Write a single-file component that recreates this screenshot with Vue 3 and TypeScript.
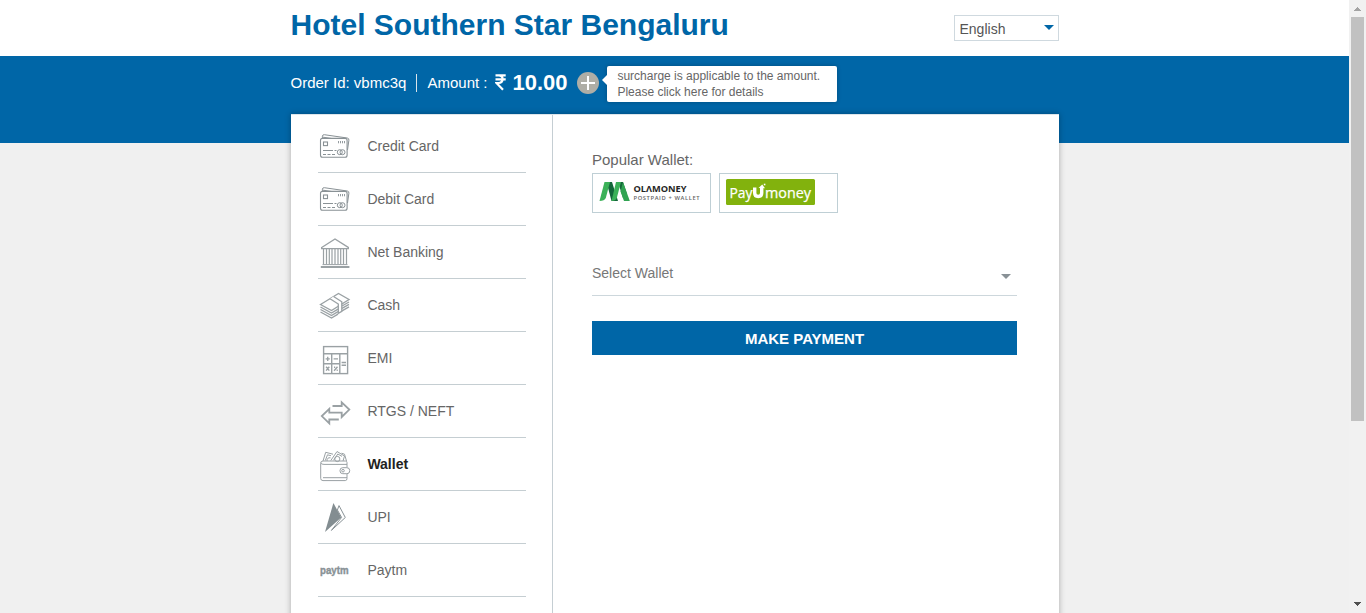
<script setup lang="ts">
import { ref } from 'vue'

interface Method {
  id: string
  label: string
}

const methods: Method[] = [
  { id: 'credit', label: 'Credit Card' },
  { id: 'debit', label: 'Debit Card' },
  { id: 'bank', label: 'Net Banking' },
  { id: 'cash', label: 'Cash' },
  { id: 'emi', label: 'EMI' },
  { id: 'rtgs', label: 'RTGS / NEFT' },
  { id: 'wallet', label: 'Wallet' },
  { id: 'upi', label: 'UPI' },
  { id: 'paytm', label: 'Paytm' },
]
const active = ref('wallet')
</script>

<template>
  <div class="window">
    <div class="page">
      <header class="top">
        <div class="wrap top-row">
          <h1>Hotel Southern Star Bengaluru</h1>
          <div class="lang"><span>English</span><i></i></div>
        </div>
      </header>
      <section class="band">
        <div class="wrap order">
          <span class="order-id">Order Id: vbmc3q</span>
          <span class="sep"></span>
          <span class="amount-label">Amount :</span>
          <svg class="rupee" width="11" height="17" viewBox="0 0 11 17">
            <path d="M.5 1.3H10.7M.5 5.3H10.7M.8 1.3H3.7Q7.6 1.3 7.6 5.1Q7.6 9 3.5 9H1.5L8 15.8" fill="none" stroke="#fff" stroke-width="2.2" />
          </svg>
          <strong class="amount">10.00</strong>
          <svg class="plus" width="22" height="22" viewBox="0 0 22 22">
            <circle cx="11" cy="11" r="11" fill="#afaea6" />
            <path d="M11 4v14M4 11h14" stroke="#fff" stroke-width="2" />
          </svg>
          <div class="tip">surcharge is applicable to the amount.<br />Please click here for details</div>
        </div>
      </section>
      <main class="wrap card">
        <nav class="menu">
          <div
            v-for="m in methods"
            :key="m.id"
            class="item"
            :class="{ active: m.id === active }"
            @click="active = m.id"
          >
            <svg class="icon" width="32" height="34" viewBox="0 0 32 34" fill="none" stroke="#9aa1a4">
              <g v-if="m.id === 'credit' || m.id === 'debit'" stroke="#899195">
                <path d="M3.4 9V6.2Q3.6 4.5 5.3 4.7L28.3 8Q30.2 8.4 29.9 10.2L28.5 20M4 7.2L28 10.8" stroke-width="1" />
                <rect x="1.5" y="8.4" width="26.6" height="18.8" rx="2" fill="#fff" stroke-width="1.1" />
                <rect x="4.5" y="12" width="4" height="3.6" stroke-width="1.1" />
                <path d="M19.5 11v2.3M21.5 11v2.3M23.5 11v2.3M25.5 11v2.3" stroke-width=".9" />
                <path d="M4 20.5h10M15.5 20.5h2M4 24.5h3M8.5 24.5h3M13 24.5h3" />
                <circle cx="20.8" cy="22.2" r="2.5" />
                <circle cx="23.5" cy="22.2" r="2.5" />
              </g>
              <g v-else-if="m.id === 'bank'">
                <path d="M2.7 11.5L16 3L29.3 11.5V12.6H2.7Z" stroke-width="1.4" />
                <path d="M4.5 13v15M7.5 13v15M10.3 13v15M13 13v15M16 13v15M19 13v15M21.7 13v15M24.5 13v15M27.5 13v15" stroke-width="1.2" />
                <path d="M3.5 28.6h25" stroke-width="1" />
                <path d="M1.8 31h28.6" stroke-width="2" />
              </g>
              <g v-else-if="m.id === 'cash'" stroke-width="1.35">
                <path d="M1.5 15.5L19.5 4.5L30 10.5L12.5 21.5Z" />
                <path d="M1.5 18L12.5 24L19 20.2M1.5 20.5L12.5 26.5L19 22.7M1.5 23L12.5 29L19 25.2M23 17L30 13M23 19.4L30 15.4M23 21.8L30 17.8" />
                <path d="M11 9.7L19.3 15V24.4L22.8 22.3V12.8L14.6 7.5" fill="#fff" />
              </g>
              <g v-else-if="m.id === 'emi'" stroke-width="1.4">
                <rect x="4.6" y="4.6" width="24" height="27" />
                <path d="M4.6 11.8h24M4.6 21.8h16.2M12.7 11.8v19.8M20.8 11.8v19.8" />
                <path d="M6.6 16.9h4.2M8.7 14.8v4.2M14.6 16.9h4.4M22.6 20.5h4.4M22.6 23.2h4.4M7.1 24.8l3.2 3.8M10.3 24.8l-3.2 3.8M18.5 24.7l-3.4 4M15 25.2h1.2M17.6 28.2h1.2" />
              </g>
              <path
                v-else-if="m.id === 'rtgs'"
                d="M13.5 11H22.7V7.3L30.3 14.6L22.7 22V17.7H10.3V13.9L2.8 21.1L10.3 28.3V24.5H19.8"
                stroke-width="1.8"
              />
              <g v-else-if="m.id === 'wallet'" stroke-width="1">
                <path d="M4 13L6.7 4.3L14 6.2M11.8 12.5L18 3.5L25.5 8L24 13M22.5 5.2L25.5 6.2L27.5 13M6.3 12.5L8.5 6.8L12 7.7M14.5 12.3L18.8 6L23 8.4" />
                <circle cx="18.3" cy="11" r="2.6" />
                <path d="M8 13Q8 9.2 11.5 9.8" />
                <path d="M28 19.5V14.5Q28 13 26.3 13H4Q1.7 13 1.7 15.3V30.3Q1.7 32.6 4 32.6H26.3Q28 32.6 28 30.5V25.5M1.8 15Q2.5 16.4 5 16.4H28M4 29.7h24" />
                <rect x="21" y="19.7" width="9.7" height="6" rx="2.8" fill="#fff" />
                <circle cx="24" cy="22.7" r="1.3" />
              </g>
              <g v-else-if="m.id === 'upi'" stroke="none">
                <path d="M14.4 2L22.2 16.4L6 31Z" fill="#838d91" />
                <path d="M20 4.6L26.3 16.5L12.4 29.4L22.6 16.4L18.4 9Z" stroke="#899296" stroke-width="1" />
              </g>
              <text
                v-else
                x="1"
                y="19.6"
                textLength="28.5"
                lengthAdjust="spacingAndGlyphs"
                fill="#899296"
                stroke="#899296"
                stroke-width=".4"
                font-family="Liberation Sans, Arial, sans-serif"
                font-weight="bold"
                font-size="10.5"
              >paytm</text>
            </svg>
            <span>{{ m.label }}</span>
          </div>
        </nav>
        <div class="panel">
          <div class="popular">Popular Wallet:</div>
          <div class="logos">
            <div class="logo">
              <svg width="117" height="38" viewBox="0 0 117 38" font-family="Open Sans, sans-serif">
                <path d="M13.5 8H19L25 27H18.5Z" fill="#14673a" />
                <path d="M11.5 8H17L12.8 24Q11.5 27 6.5 27Z" fill="#3bb158" />
                <path d="M25 8H30L34 20L30 24Z" fill="#14673a" />
                <path d="M23 8H28L23.8 24Q22.5 27 18.5 27Z" fill="#3bb158" />
                <path d="M30 8L36.8 27H31L27.5 17.5Z" fill="#31a352" />
                <text x="40.5" y="17.5" textLength="53" lengthAdjust="spacingAndGlyphs" font-size="9.3" font-weight="700" fill="#252525">OLΛMONEY</text>
                <text x="40.5" y="25.6" textLength="66" lengthAdjust="spacing" font-size="5.8" font-weight="600" fill="#666">POSTPAID + WALLET</text>
              </svg>
            </div>
            <div class="logo">
              <svg width="117" height="38" viewBox="0 0 117 38" fill="#fff">
                <rect x="6" y="5" width="89" height="26" rx="1.5" fill="#82b20d" />
                <g font-family="Open Sans, sans-serif" font-size="14.5" stroke="#fff" stroke-width=".25">
                  <text x="9.5" y="24" textLength="23" lengthAdjust="spacingAndGlyphs">Pay</text>
                  <text x="45" y="24" textLength="46" lengthAdjust="spacingAndGlyphs">money</text>
                </g>
                <path d="M34.7 13.5V19Q34.7 22.5 38.2 22.5Q41.7 22.5 41.7 19V13.5" fill="none" stroke="#fff" stroke-width="3.4" />
                <path d="M38.6 14L42.2 10.4L45 14.2Z" />
                <path d="M43.8 9.7h1.6v1.6h-1.6z" />
              </svg>
            </div>
          </div>
          <div class="select"><span>Select Wallet</span><i></i></div>
          <button class="pay" type="button">MAKE PAYMENT</button>
        </div>
      </main>
    </div>
    <div class="scrollbar">
      <svg width="17" height="17" viewBox="0 0 17 17" shape-rendering="crispEdges"><path d="M5 11h7L8.5 7Z" fill="#a3a3a3" /></svg>
      <div class="thumb"></div>
      <svg width="17" height="17" viewBox="0 0 17 17" shape-rendering="crispEdges"><path d="M5 6h7L8.5 10Z" fill="#505050" /></svg>
    </div>
  </div>
</template>

<style>
html,
body {
  margin: 0;
  overflow: hidden;
}
</style>

<style scoped>
* {
  box-sizing: border-box;
}
.window {
  display: flex;
  width: 1366px;
  height: 613px;
  overflow: hidden;
  background: #f0f0f0;
  color: #666;
  font-family: "Liberation Sans", Arial, sans-serif;
}
.page {
  width: 1349px;
}
.wrap {
  width: 768px;
  margin-left: 291px;
}
.top {
  height: 56px;
  background: #fff;
}
.top-row {
  display: flex;
  justify-content: space-between;
}
h1 {
  margin: 7px 0 0 -0.5px;
  font-size: 30px;
  line-height: 36px;
  color: #0066a7;
  white-space: nowrap;
}
.lang {
  display: flex;
  align-items: center;
  justify-content: space-between;
  width: 105px;
  height: 26px;
  margin-top: 15px;
  padding: 2px 4px 0 4.5px;
  border: 1px solid #cfd9df;
  font-size: 14px;
  color: #555;
}
.lang i {
  margin-top: -4px;
  border: 5px solid transparent;
  border-top-color: #0066a7;
  border-bottom: 0;
}
.band {
  height: 87px;
  background: #0066a7;
}
.order {
  display: flex;
  align-items: flex-start;
  padding-top: 10px;
  color: #fff;
  font-size: 15px;
  line-height: 18px;
  white-space: nowrap;
}
.order-id {
  width: 125px;
  margin-top: 8px;
  text-indent: -0.5px;
}
.sep {
  width: 1px;
  height: 18px;
  margin: 8px 11px 0 0;
  background: #d9e4ea;
}
.amount-label {
  width: 67px;
  margin-top: 8px;
  text-indent: -0.5px;
}
.rupee {
  margin-top: 8px;
}
.amount {
  width: 64px;
  margin-left: 7px;
  margin-top: 5px;
  font-size: 22px;
  line-height: 24px;
  text-indent: -0.5px;
}
.plus {
  margin-top: 6px;
}
.tip {
  position: relative;
  width: 230px;
  height: 36px;
  margin-left: 8px;
  padding: 2px 0 0 10.4px;
  border-radius: 2px;
  background: #fff;
  box-shadow: 0 0 4px rgba(0, 0, 0, 0.25);
  color: #666;
  font-size: 12px;
  line-height: 16px;
}
.tip::before {
  content: "";
  position: absolute;
  top: 9px;
  left: -5px;
  border: 5px solid transparent;
  border-right-color: #fff;
  border-left: 0;
}
.card {
  position: relative;
  display: flex;
  height: 560px;
  margin-top: -29px;
  background: #fff;
  border-top: 1px solid #dde5ea;
  box-shadow: 0 0 6px rgba(0, 0, 0, 0.3);
}
.menu {
  width: 262px;
  padding: 5px 26px 0 27px;
  border-right: 1px solid #c5ced3;
}
.item {
  display: flex;
  align-items: center;
  height: 53px;
  border-bottom: 1px solid #c5ced2;
  font-size: 14px;
  cursor: pointer;
}
.icon {
  align-self: flex-start;
  margin: 10px 16.4px 0 1px;
  overflow: visible;
}
.item.active {
  color: #222;
  font-weight: bold;
}
.panel {
  width: 425px;
  margin-left: 39px;
}
.popular {
  margin-top: 36px;
  font-size: 15px;
  line-height: 18px;
}
.logos {
  display: flex;
  gap: 8px;
  margin-top: 4px;
}
.logo {
  width: 119px;
  height: 40px;
  border: 1px solid #bfcfd5;
}
.logo svg {
  display: block;
}
.select {
  display: flex;
  justify-content: space-between;
  height: 35px;
  margin-top: 48px;
  padding-right: 6px;
  border-bottom: 1px solid #cdd7dc;
  color: #777;
  font-size: 14px;
  line-height: 25px;
}
.select i {
  align-self: flex-start;
  margin-top: 13px;
  border: 5px solid transparent;
  border-top-color: #899196;
  border-bottom: 0;
}
.pay {
  display: block;
  width: 100%;
  height: 34px;
  margin-top: 25px;
  padding: 1px 0 0;
  border: 0;
  background: #0066a7;
  color: #fff;
  font: bold 15px "Liberation Sans", Arial, sans-serif;
}
.scrollbar {
  display: flex;
  flex-direction: column;
  width: 17px;
  height: 613px;
  background: #f1f1f1;
}
.thumb {
  width: 13px;
  height: 404px;
  margin: 0 2px auto;
  background: #c1c1c1;
}
</style>
